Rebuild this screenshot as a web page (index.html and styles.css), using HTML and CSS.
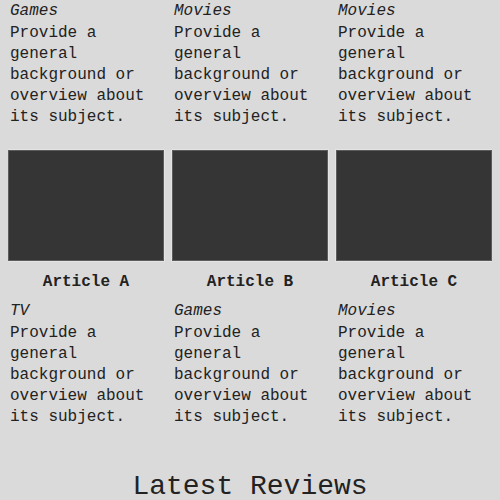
FILE: index.html
```html
<!DOCTYPE html>
<html lang="en">
<head>
<meta charset="utf-8">
<title>Articles</title>
<link rel="stylesheet" href="styles.css">
</head>
<body>
  <section class="articles">
    <article class="card">
      <div class="thumb"></div>
      <h3 class="card-title">Article 1</h3>
      <p class="card-category">Games</p>
      <p class="card-text">Provide a general background or overview about its subject.</p>
    </article>
    <article class="card">
      <div class="thumb"></div>
      <h3 class="card-title">Article 2</h3>
      <p class="card-category">Movies</p>
      <p class="card-text">Provide a general background or overview about its subject.</p>
    </article>
    <article class="card">
      <div class="thumb"></div>
      <h3 class="card-title">Article 3</h3>
      <p class="card-category">Movies</p>
      <p class="card-text">Provide a general background or overview about its subject.</p>
    </article>
    <article class="card">
      <div class="thumb"></div>
      <h3 class="card-title">Article A</h3>
      <p class="card-category">TV</p>
      <p class="card-text">Provide a general background or overview about its subject.</p>
    </article>
    <article class="card">
      <div class="thumb"></div>
      <h3 class="card-title">Article B</h3>
      <p class="card-category">Games</p>
      <p class="card-text">Provide a general background or overview about its subject.</p>
    </article>
    <article class="card">
      <div class="thumb"></div>
      <h3 class="card-title">Article C</h3>
      <p class="card-category">Movies</p>
      <p class="card-text">Provide a general background or overview about its subject.</p>
    </article>
  </section>

  <h2 class="section-heading">Latest Reviews</h2>

  <section class="articles">
    <article class="card">
      <div class="thumb"></div>
      <h3 class="card-title">Review 1</h3>
      <p class="card-category">Games</p>
      <p class="card-text">Provide a general background or overview about its subject.</p>
    </article>
    <article class="card">
      <div class="thumb"></div>
      <h3 class="card-title">Review 2</h3>
      <p class="card-category">Movies</p>
      <p class="card-text">Provide a general background or overview about its subject.</p>
    </article>
    <article class="card">
      <div class="thumb"></div>
      <h3 class="card-title">Review 3</h3>
      <p class="card-category">TV</p>
      <p class="card-text">Provide a general background or overview about its subject.</p>
    </article>
  </section>

  <script src="main.js"></script>
</body>
</html>
```

FILE: styles.css
```css
html {
  background: #dadada;
}

body {
  margin: 8px;
  color: #222222;
  font-family: "Liberation Mono", "DejaVu Sans Mono", monospace;
  font-size: 16px;
  line-height: 21px;
}

.articles {
  display: grid;
  grid-template-columns: repeat(3, 1fr);
  column-gap: 8px;
  row-gap: 22px;
}

.card {
  display: flex;
  flex-direction: column;
  min-width: 0;
}

.thumb {
  box-sizing: border-box;
  height: 111px;
  background: #353535;
  border: 1px solid #5c5c5c;
  box-shadow: 0 0 0 1px #e4e4e4;
}

.card-title {
  margin: 11px 0 0;
  font-size: 16px;
  font-weight: bold;
  text-align: center;
}

.card-category {
  margin: 8px 0 0;
  padding: 0 2px;
  font-style: italic;
}

.card-text {
  margin: 1px 0 0;
  padding: 0 2px;
}

.section-heading {
  margin: 43px 0 40px;
  font-size: 28px;
  font-weight: normal;
  line-height: normal;
  text-align: center;
}
```

FILE: main.js
```js
window.scrollTo(0, 158);
```
